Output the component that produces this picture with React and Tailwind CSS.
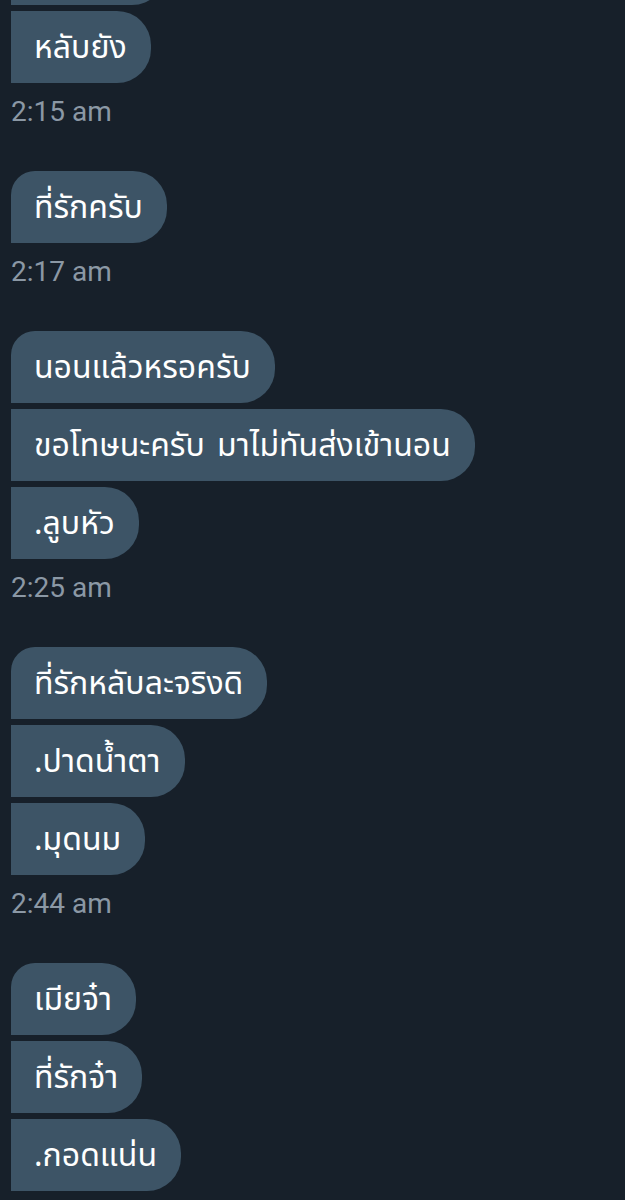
import React from "react";

const groups = [
  { time: "2:15 am", messages: ["หลับยัง"], cut: true },
  { time: "2:17 am", messages: ["ที่รักครับ"] },
  {
    time: "2:25 am",
    messages: ["นอนแล้วหรอครับ", "ขอโทษนะครับ มาไม่ทันส่งเข้านอน", ".ลูบหัว"],
  },
  { time: "2:44 am", messages: ["ที่รักหลับละจริงดิ", ".ปาดน้ำตา", ".มุดนม"] },
  { time: null, messages: ["เมียจ๋า", "ที่รักจ๋า", ".กอดแน่น"] },
];

function Bubble({ text, first }) {
  return (
    <div
      className={
        "h-[72px] flex items-center bg-[#3d5466] text-white pl-[23px] pr-[24px] rounded-r-[34px] text-[32px] [word-spacing:4px] " +
        (first ? "rounded-tl-[24px]" : "")
      }
      style={{ fontFamily: '"Noto Sans Thai", "Noto Sans", Roboto, sans-serif' }}
    >
      <span className="leading-none pt-[2px]">{text}</span>
    </div>
  );
}

export default function App() {
  return (
    <div className="w-[625px] h-[1200px] overflow-hidden bg-[#17202a]">
      <div className="pl-[11px] flex flex-col">
        {groups.map((g, gi) => (
          <div key={gi} className="flex flex-col items-start">
            <div className="flex flex-col items-start gap-[6px]">
              {g.cut && (
                <div className="w-[155px] h-[72px] mt-[-67px] bg-[#3d5466] rounded-r-[34px]" />
              )}
              {g.messages.map((m, i) => (
                <Bubble key={i} text={m} first={i === 0 && !g.cut} />
              ))}
            </div>
            {g.time && (
              <div
                className="mt-[14px] mb-[44px] h-[30px] leading-[30px] text-[28px] text-[#8b98a5]"
                style={{ fontFamily: "Roboto, sans-serif" }}
              >
                {g.time}
              </div>
            )}
          </div>
        ))}
      </div>
    </div>
  );
}
